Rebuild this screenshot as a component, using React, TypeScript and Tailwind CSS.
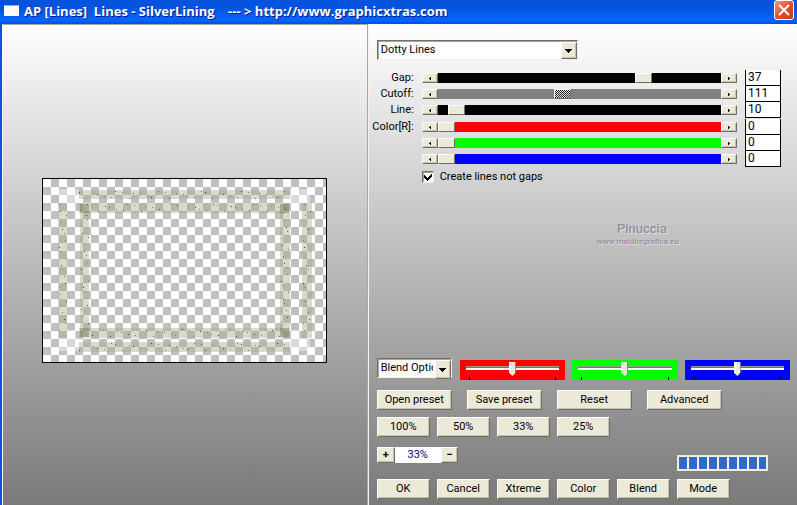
import React, { useState } from 'react';

const RAISED =
  'border border-t-white border-l-white border-r-[#716f64] border-b-[#716f64] bg-[#ece9d8] shadow-[inset_-1px_-1px_0_#c5c2b0]';

const RANGE =
  'h-2.5 min-w-0 flex-1 appearance-none [&::-webkit-slider-thumb]:h-2.5 [&::-webkit-slider-thumb]:w-[17px] [&::-webkit-slider-thumb]:appearance-none [&::-webkit-slider-thumb]:border [&::-webkit-slider-thumb]:border-t-white [&::-webkit-slider-thumb]:border-l-white [&::-webkit-slider-thumb]:border-r-[#716f64] [&::-webkit-slider-thumb]:border-b-[#716f64] [&::-webkit-slider-thumb]:bg-[#ece9d8]';

const DITHERED =
  '[&::-webkit-slider-thumb]:bg-[repeating-conic-gradient(#222_0_25%,#ece9d8_0_50%)] [&::-webkit-slider-thumb]:bg-[length:2px_2px]';

const PARAMS = [
  { label: 'Gap:', name: 'Gap', value: 37, max: 50, track: 'bg-black' },
  { label: 'Cutoff:', name: 'Cutoff', value: 111, max: 255, track: `bg-[#808080] ${DITHERED}` },
  { label: 'Line:', name: 'Line', value: 10, max: 255, track: 'bg-black' },
];

const CHANNELS = [
  { label: 'Color[R]:', name: 'Red', value: 0, max: 255, track: 'bg-[#ff0000]' },
  { label: '', name: 'Green', value: 0, max: 255, track: 'bg-[#00ff00]' },
  { label: '', name: 'Blue', value: 0, max: 255, track: 'bg-[#0000ff]' },
];

const BLEND_BARS = [
  { name: 'Red blend', color: 'bg-[#ff0000]' },
  { name: 'Green blend', color: 'bg-[#00ff00]' },
  { name: 'Blue blend', color: 'bg-[#0000ff]' },
];

type Param = (typeof PARAMS)[number];

const StepButton: React.FC<{ dir: 'left' | 'right'; name: string; onClick: () => void }> = ({ dir, name, onClick }) => (
  <button
    type="button"
    aria-label={`${name} ${dir}`}
    onClick={onClick}
    className={`flex h-2.5 w-4 shrink-0 items-center justify-center ${RAISED}`}
  >
    <svg width="2" height="3" viewBox="0 0 2 3" shapeRendering="crispEdges">
      <path d={dir === 'left' ? 'M1 0h1v3H1V2H0V1h1z' : 'M0 0h1v1h1v1H1v1H0z'} />
    </svg>
  </button>
);

const ParamRow: React.FC<Param> = ({ label, name, value: initial, max, track }) => {
  const [value, setValue] = useState(initial);
  const update = (next: number) => setValue(Math.max(0, Math.min(max, next || 0)));

  return (
    <div className="flex h-4 items-center gap-2">
      <label htmlFor={name} className="flex w-10 shrink-0 justify-end whitespace-nowrap">
        {label}
      </label>
      <div className="flex min-w-0 flex-1">
        <StepButton dir="left" name={name} onClick={() => update(value - 1)} />
        <input
          id={name}
          type="range"
          aria-label={name}
          min={0}
          max={max}
          value={value}
          onChange={(e) => update(Number(e.target.value))}
          className={`${RANGE} ${track}`}
        />
        <StepButton dir="right" name={name} onClick={() => update(value + 1)} />
      </div>
      <input
        type="text"
        aria-label={`${name} value`}
        value={value}
        onChange={(e) => update(Number(e.target.value))}
        className="h-4 w-9 border-x border-b border-black bg-white px-0.5 pb-0.5 text-xs leading-3"
      />
    </div>
  );
};

const DropDown: React.FC<{ name: string; options: string[]; width: string }> = ({ name, options, width }) => (
  <div className={`relative ${width}`}>
    <select
      aria-label={name}
      className="h-5 w-full appearance-none overflow-hidden border border-t-[#716f64] border-l-[#716f64] border-r-[#f1efe2] border-b-[#f1efe2] bg-white pr-[18px] pl-[3px] shadow-[inset_1px_1px_0_#aca899]"
    >
      {options.map((option) => (
        <option key={option}>{option}</option>
      ))}
    </select>
    <span className={`pointer-events-none absolute top-0.5 right-px bottom-px flex w-4 items-center justify-center ${RAISED}`}>
      <svg width="7" height="4" viewBox="0 0 7 4" shapeRendering="crispEdges">
        <path d="M0 0h7L3.5 4z" />
      </svg>
    </span>
  </div>
);

const PushButton: React.FC<{ children: React.ReactNode; size: string }> = ({ children, size }) => (
  <button type="button" className={`flex items-center justify-center whitespace-nowrap ${size} ${RAISED}`}>
    {children}
  </button>
);

const BlendBar: React.FC<{ name: string; color: string }> = ({ name, color }) => {
  const [value, setValue] = useState(50);

  return (
    <div className={`flex h-5 min-w-0 flex-1 flex-col justify-between px-1.5 pt-0.5 ${color}`}>
      <input
        type="range"
        aria-label={name}
        value={value}
        onChange={(e) => setValue(Number(e.target.value))}
        className="h-3.5 w-full appearance-none bg-[linear-gradient(#9d9a8c_0_1px,#77756a_1px_2px,#fff_2px_4px)] bg-[length:100%_4px] bg-[position:0_4px] bg-no-repeat [&::-webkit-slider-thumb]:h-3.5 [&::-webkit-slider-thumb]:w-[7px] [&::-webkit-slider-thumb]:appearance-none [&::-webkit-slider-thumb]:bg-[linear-gradient(90deg,#fff_0_2px,#ece9d8_2px_6px,#8a8778_6px)] [&::-webkit-slider-thumb]:[clip-path:polygon(0_0,100%_0,100%_75%,50%_100%,0_75%)]"
      />
      <div className="flex h-[3px] justify-between px-[3px]">
        <span className="w-px bg-black" />
        <span className="w-px bg-black" />
      </div>
    </div>
  );
};

// Bands of the frame: x, y, width, height
const BANDS = [
  [36, 11, 211, 9],
  [36, 24, 211, 10],
  [36, 149, 211, 10],
  [36, 163, 211, 10],
  [15, 24, 9, 135],
  [37, 34, 9, 115],
  [237, 34, 10, 115],
  [259, 24, 10, 135],
];

const CORNERS = [
  [37, 25],
  [237, 25],
  [37, 149],
  [237, 149],
];

const HAZE = [
  [16, 10, 20, 14],
  [247, 10, 20, 14],
  [16, 159, 20, 13],
  [247, 159, 20, 13],
  [24, 24, 9, 8],
  [248, 24, 9, 8],
  [24, 151, 9, 8],
  [248, 151, 9, 8],
];

const DRIFT = [2, 7, 4, 8, 1, 6, 3];

const SPECKS = BANDS.flatMap(([x, y, w, h], band) => {
  const length = Math.max(w, h);
  return Array.from({ length: Math.floor(length / 6) }, (_, i) => {
    const along = i * 6 + ((i + band) % 3);
    const across = DRIFT[(i * 3 + band) % 7];
    return w > h ? [x + along, y + across] : [x + across, y + along];
  });
});

const Preview: React.FC = () => (
  <svg
    width="285"
    height="185"
    viewBox="0 0 283 183"
    className="border border-black bg-white"
    shapeRendering="crispEdges"
    role="img"
    aria-label="Preview"
  >
    <defs>
      <pattern id="checker" width="16" height="16" patternUnits="userSpaceOnUse">
        <path d="M0 0h16v16H0z" fill="#fff" />
        <path d="M8 0h8v8H8zM0 8h8v8H0z" fill="#c0c0c0" />
      </pattern>
    </defs>
    <path d="M0 0h283v183H0z" fill="url(#checker)" />
    {HAZE.map(([x, y, w, h]) => (
      <rect key={`${x}-${y}`} x={x} y={y} width={w} height={h} fill="#fff" fillOpacity=".4" />
    ))}
    {BANDS.map(([x, y, w, h]) => (
      <rect key={`${x}-${y}`} x={x} y={y} width={w} height={h} fill="#a8a88c" fillOpacity=".44" />
    ))}
    {CORNERS.map(([x, y]) => (
      <rect key={`${x}-${y}`} x={x} y={y} width="9" height="9" fill="#7c7c5a" fillOpacity=".5" />
    ))}
    {SPECKS.map(([x, y], i) => (
      <rect key={i} x={x} y={y} width="1" height="1" fill={i % 3 ? '#77776a' : '#44443a'} />
    ))}
  </svg>
);

const App: React.FC = () => {
  return (
    <div className="flex min-h-screen flex-col bg-[#0855dd] font-[Roboto,Arial,sans-serif] text-[11px] leading-4 text-black">
      {/* Title bar */}
      <header className="flex h-6 shrink-0 items-center bg-linear-to-b from-[#0553dc] from-30% via-[#0665ff] via-85% to-[#0450d4] pr-[3px] pl-1">
        <span className="mb-1 h-[11px] w-[15px] shrink-0 border border-t-[#7ab0f5] border-white bg-[#fffff6]" />
        <h1 className="mb-0.5 ml-[5px] flex-1 font-['Open_Sans',sans-serif] text-[13px] font-bold whitespace-pre text-white [text-shadow:1px_1px_#0a1883]">
          {'AP [Lines]  Lines - SilverLining    --- > http://www.graphicxtras.com'}
        </h1>
        <button
          type="button"
          aria-label="Close"
          className="mb-1 flex size-5 items-center justify-center rounded-[3px] border border-white bg-linear-to-br from-[#f0987c] via-[#e0512c] to-[#c83810]"
        >
          <svg width="12" height="12" viewBox="0 0 12 12" stroke="#fff" strokeWidth="2">
            <path d="M1 1l10 10M11 1L1 11" />
          </svg>
        </button>
      </header>

      <main className="ml-0.5 grid flex-1 grid-cols-[46fr_54fr] bg-linear-to-b from-white to-[#7a7a7a]">
        {/* Preview */}
        <section className="flex items-center justify-center border-t border-r border-l border-[#aca899] border-l-white pt-2.5 shadow-[1px_0_0_#f4f3ee]">
          <Preview />
        </section>

        {/* Controls */}
        <section className="flex min-w-0 flex-col pt-4 pb-1.5">
          <div className="pl-[9px]">
            <DropDown name="Effect" options={['Dotty Lines']} width="w-[201px]" />
          </div>

          <div className="mt-2.5 pr-4 pl-[6px]">
            {PARAMS.map((param) => (
              <ParamRow key={param.name} {...param} />
            ))}
            <div className="pt-px">
              {CHANNELS.map((param) => (
                <ParamRow key={param.name} {...param} />
              ))}
            </div>
            <label className="mt-0.5 ml-12 flex w-fit items-center gap-1.5">
              <input
                type="checkbox"
                defaultChecked
                className="peer size-3 appearance-none border border-t-[#716f64] border-l-[#716f64] border-r-[#f1efe2] border-b-[#f1efe2] bg-white shadow-[inset_1px_1px_0_#aca899]"
              />
              <svg width="8" height="8" viewBox="0 0 8 8" className="invisible -mr-0.5 -ml-4 peer-checked:visible" shapeRendering="crispEdges">
                <path d="M0 2v3l3 3 5-5V0L3 5z" />
              </svg>
              <span className="ml-1">Create lines not gaps</span>
            </label>
          </div>

          <div className="mt-9 mr-[118px] flex flex-col items-center self-end font-medium text-[#9090a0] [text-shadow:1px_1px_#e2e2e2]">
            <span className="pl-2 text-[13px] leading-4">Pinuccia</span>
            <span className="text-[8px] leading-2.5">www.maidiregrafica.eu</span>
          </div>

          <div className="mt-auto pl-[9px]">
            <div className="flex gap-2 pr-[7px]">
              <DropDown name="Blend options" options={['Blend Options']} width="w-[75px] shrink-0" />
              <div className="mt-0.5 flex min-w-0 flex-1 gap-[7px]">
                {BLEND_BARS.map((bar) => (
                  <BlendBar key={bar.name} {...bar} />
                ))}
              </div>
            </div>

            <div className="mt-2.5 flex gap-[15px]">
              {['Open preset', 'Save preset', 'Reset', 'Advanced'].map((text) => (
                <PushButton key={text} size="h-5 w-[75px]">
                  {text}
                </PushButton>
              ))}
            </div>

            <div className="mt-[7px] flex gap-[7px]">
              {['100%', '50%', '33%', '25%'].map((text) => (
                <PushButton key={text} size="h-5 w-[53px]">
                  {text}
                </PushButton>
              ))}
            </div>

            <div className="mt-2.5 flex items-start pr-[29px]">
              <PushButton size="h-4 w-[18px] font-bold">+</PushButton>
              <output className="h-4 w-[46px] bg-white text-center text-[#000080]">33%</output>
              <PushButton size="h-4 w-[17px] font-bold">−</PushButton>
              <div
                role="progressbar"
                aria-label="Rendering"
                aria-valuenow={100}
                className="mt-2 ml-auto flex h-4 w-[91px] gap-0.5 border border-[#ece9d8] bg-[#f4f2ea] p-px"
              >
                {Array.from({ length: 9 }, (_, i) => (
                  <span key={i} className="w-2 bg-[#316ac5] last:w-[7px]" />
                ))}
              </div>
            </div>

            <div className="mt-2 flex gap-[7px]">
              {['OK', 'Cancel', 'Xtreme', 'Color', 'Blend', 'Mode'].map((text) => (
                <PushButton key={text} size="h-5 w-[53px]">
                  {text}
                </PushButton>
              ))}
            </div>
          </div>
        </section>
      </main>
    </div>
  );
};

export default App;
